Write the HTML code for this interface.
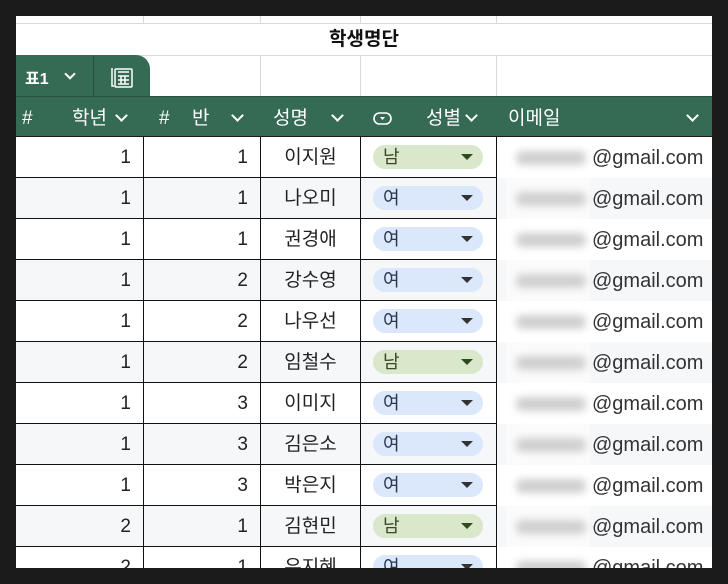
<!DOCTYPE html>
<html><head><meta charset="utf-8"><style>
*{margin:0;padding:0;box-sizing:border-box}
body{width:728px;height:584px;background:#1b1b1b;position:relative;overflow:hidden;font-family:"Liberation Sans","Noto Sans CJK KR",sans-serif}
.a{position:absolute}
#page{left:16px;top:16px;width:696px;height:552px;background:#fff;overflow:hidden}
.vl{position:absolute;width:1px;background:#d9d9d9}
.hl{position:absolute;height:1px;background:#d9d9d9}
.hdr{position:absolute;left:0;top:80px;width:696px;height:41px;background:#356a54;border-top:1px solid #27503f;border-bottom:1px solid #1a1a1a;color:#fff;font-size:19px}
.hdr span{position:absolute;top:0;line-height:44px}
.chev{position:absolute;width:9px;height:9px;border-right:2px solid #fff;border-bottom:2px solid #fff;transform:rotate(45deg)}
.row{position:absolute;left:0;width:696px;height:41px;font-size:19px;color:#222}
.row.alt{background:#f5f7f9}
.c{position:absolute;top:0;height:41px;border-bottom:1px solid #111;line-height:42px}
.c1{left:0;width:128px;text-align:right;padding-right:12px;border-right:1px solid #111}
.c2{left:128px;width:117px;text-align:right;padding-right:12px;border-right:1px solid #111}
.c3{left:245px;width:100px;text-align:center;border-right:1px solid #111}
.c4{left:345px;width:136px;border-right:1px solid #111}
.pill{position:absolute;left:12px;top:8px;width:110px;height:24px;border-radius:12px;line-height:24px;padding-left:10px;font-size:18px}
.m{background:#d9e7cb;color:#3a4a24}
.f{background:#dbe8fb;color:#2a3550}
.tri{position:absolute;right:10px;top:9px;width:0;height:0;border-left:6px solid transparent;border-right:6px solid transparent;border-top:6px solid #333}
.m .tri{border-top-color:#2f4a1e}
.blur{position:absolute;left:490px;top:0;width:84px;height:41px;background:#fff}
.row.alt .blur{background:#fbfbfc}
.blob{position:absolute;left:10px;top:14px;width:70px;height:14px;background:#cfcfcf;filter:blur(4px);border-radius:6px}
.em{position:absolute;left:576px;top:0;line-height:42px;font-size:20px;color:#333}
</style></head><body>
<div id="page" class="a">
<div class="hl" style="left:0;top:7px;width:696px"></div>
<div class="vl" style="left:127px;top:0;height:7px"></div>
<div class="vl" style="left:244px;top:0;height:7px"></div>
<div class="vl" style="left:344px;top:0;height:7px"></div>
<div class="vl" style="left:480px;top:0;height:7px"></div>
<div class="a" style="left:0;top:8px;width:696px;height:31px;text-align:center;font-weight:bold;font-size:19px;line-height:32px;color:#111">학생명단</div>
<div class="hl" style="left:0;top:39px;width:696px"></div>
<div class="vl" style="left:244px;top:40px;height:40px"></div>
<div class="vl" style="left:344px;top:40px;height:40px"></div>
<div class="vl" style="left:480px;top:40px;height:40px"></div>
<div class="a" style="left:0;top:39px;width:134px;height:42px;background:#356a54;border-top-right-radius:14px"></div>
<div class="a" style="left:77px;top:40px;width:1px;height:40px;background:#27503f"></div>
<div class="a" style="left:9px;top:49px;color:#fff;font-weight:bold;font-size:16px">표1</div>
<div class="chev" style="left:50px;top:54px;width:8px;height:8px"></div>
<svg class="a" style="left:94px;top:49px" width="24" height="24" viewBox="0 0 24 24" fill="none" stroke="#fff" stroke-width="1.5"><path d="M2 3v18h2"/><rect x="5" y="4" width="17" height="18" rx="1"/><path d="M8 11h11M8 15h11M8 19h11M11 11v8M15 11v8"/><path d="M8 7h11"/></svg>
<div class="hdr">
<span style="left:6px">#</span><span style="left:56px">학년</span><div class="chev" style="left:101px;top:14px"></div>
<span style="left:143px">#</span><span style="left:176px">반</span><div class="chev" style="left:217px;top:14px"></div>
<span style="left:257px">성명</span><div class="chev" style="left:317px;top:14px"></div>
<svg class="a" style="left:357px;top:14px" width="20" height="16" viewBox="0 0 20 16"><rect x="1" y="2" width="17" height="11" rx="5.5" fill="none" stroke="#fff" stroke-width="1.6"/><path d="M7 6h5l-2.5 3z" fill="#fff"/></svg>
<span style="left:410px">성별</span><div class="chev" style="left:451px;top:14px"></div>
<span style="left:492px">이메일</span><div class="chev" style="left:672px;top:14px"></div>
</div>
<div class="row" style="top:121px"><div class="c c1">1</div><div class="c c2">1</div><div class="c c3">이지원</div><div class="c c4"><div class="pill m">남<div class="tri"></div></div></div><div class="blur"><div class="blob"></div></div><div class="em">@gmail.com</div></div>
<div class="row alt" style="top:162px"><div class="c c1">1</div><div class="c c2">1</div><div class="c c3">나오미</div><div class="c c4"><div class="pill f">여<div class="tri"></div></div></div><div class="blur"><div class="blob"></div></div><div class="em">@gmail.com</div></div>
<div class="row" style="top:203px"><div class="c c1">1</div><div class="c c2">1</div><div class="c c3">권경애</div><div class="c c4"><div class="pill f">여<div class="tri"></div></div></div><div class="blur"><div class="blob"></div></div><div class="em">@gmail.com</div></div>
<div class="row alt" style="top:244px"><div class="c c1">1</div><div class="c c2">2</div><div class="c c3">강수영</div><div class="c c4"><div class="pill f">여<div class="tri"></div></div></div><div class="blur"><div class="blob"></div></div><div class="em">@gmail.com</div></div>
<div class="row" style="top:285px"><div class="c c1">1</div><div class="c c2">2</div><div class="c c3">나우선</div><div class="c c4"><div class="pill f">여<div class="tri"></div></div></div><div class="blur"><div class="blob"></div></div><div class="em">@gmail.com</div></div>
<div class="row alt" style="top:326px"><div class="c c1">1</div><div class="c c2">2</div><div class="c c3">임철수</div><div class="c c4"><div class="pill m">남<div class="tri"></div></div></div><div class="blur"><div class="blob"></div></div><div class="em">@gmail.com</div></div>
<div class="row" style="top:367px"><div class="c c1">1</div><div class="c c2">3</div><div class="c c3">이미지</div><div class="c c4"><div class="pill f">여<div class="tri"></div></div></div><div class="blur"><div class="blob"></div></div><div class="em">@gmail.com</div></div>
<div class="row alt" style="top:408px"><div class="c c1">1</div><div class="c c2">3</div><div class="c c3">김은소</div><div class="c c4"><div class="pill f">여<div class="tri"></div></div></div><div class="blur"><div class="blob"></div></div><div class="em">@gmail.com</div></div>
<div class="row" style="top:449px"><div class="c c1">1</div><div class="c c2">3</div><div class="c c3">박은지</div><div class="c c4"><div class="pill f">여<div class="tri"></div></div></div><div class="blur"><div class="blob"></div></div><div class="em">@gmail.com</div></div>
<div class="row alt" style="top:490px"><div class="c c1">2</div><div class="c c2">1</div><div class="c c3">김현민</div><div class="c c4"><div class="pill m">남<div class="tri"></div></div></div><div class="blur"><div class="blob"></div></div><div class="em">@gmail.com</div></div>
<div class="row" style="top:531px"><div class="c c1">2</div><div class="c c2">1</div><div class="c c3">유지혜</div><div class="c c4"><div class="pill f">여<div class="tri"></div></div></div><div class="blur"><div class="blob"></div></div><div class="em">@gmail.com</div></div>
</div>
</body></html>
